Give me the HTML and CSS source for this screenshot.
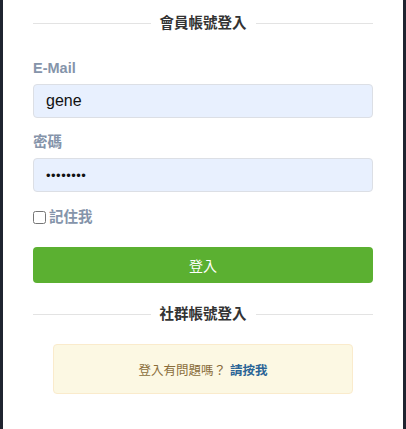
FILE: index.html
```html
<!DOCTYPE html>
<html lang="zh-Hant">
<head>
<meta charset="utf-8">
<title>會員登入</title>
<link rel="stylesheet" href="styles.css">
</head>
<body>
<div class="panel">
  <div class="divider"><span>會員帳號登入</span></div>
  <form class="form">
    <div class="field">
      <label class="label" for="email">E-Mail</label>
      <input class="input" id="email" type="text" value="gene">
    </div>
    <div class="field">
      <label class="label" for="pw">密碼</label>
      <input class="input input-pw" id="pw" type="password" value="12345678">
    </div>
    <div class="remember">
      <input type="checkbox" id="rm" class="check">
      <label for="rm" class="label">記住我</label>
    </div>
    <button type="button" class="btn">登入</button>
  </form>
  <div class="divider divider-social"><span>社群帳號登入</span></div>
  <div class="alert">登入有問題嗎？ <a href="#" class="alert-link">請按我</a></div>
</div>
</body>
</html>
```
FILE: styles.css
```css
html, body {
  margin: 0;
  padding: 0;
  height: 100%;
}
body {
  background: #1f2430;
  font-family: "Liberation Sans", "Noto Sans CJK TC", sans-serif;
  font-size: 14px;
  color: #333;
  padding: 0 3px;
  box-sizing: border-box;
}
.panel {
  background: #fff;
  min-height: 100%;
  padding: 13px 30px 20px;
  box-sizing: border-box;
}
.divider {
  display: flex;
  align-items: center;
  gap: 9px;
  font-weight: bold;
  font-size: 14.5px;
  line-height: 20px;
  color: #333;
}
.divider::before,
.divider::after {
  content: "";
  flex: 1;
  height: 1px;
  background: #e3e3e3;
}
.form {
  margin-top: 25px;
}
.field {
  display: flex;
  flex-direction: column;
  gap: 6px;
  margin-bottom: 14px;
}
.label {
  font-weight: bold;
  font-size: 14.5px;
  line-height: 20px;
  color: #8594aa;
}
.input {
  height: 34px;
  box-sizing: border-box;
  border: 1px solid #dcdfe5;
  border-radius: 4px;
  background: #e8f0fe;
  padding: 0 12px;
  font-family: "Liberation Sans", "Noto Sans CJK TC", sans-serif;
  font-size: 16px;
  color: #111;
  outline: none;
}
.input-pw {
  font-size: 13px;
  letter-spacing: 0.5px;
}
.remember {
  display: flex;
  align-items: center;
  gap: 3px;
  margin-top: 15px;
  height: 20px;
}
.check {
  margin: 0;
  width: 13px;
  height: 13px;
}
.btn {
  display: block;
  width: 100%;
  height: 36px;
  margin-top: 20px;
  border: none;
  border-radius: 4px;
  background: #5bb031;
  color: #fff;
  font-family: "Liberation Sans", "Noto Sans CJK TC", sans-serif;
  font-size: 14px;
}
.divider-social {
  margin-top: 21px;
}
.alert {
  width: 300px;
  height: 50px;
  box-sizing: border-box;
  margin: 20px auto 0;
  border: 1px solid #faebcc;
  border-radius: 4px;
  background: #fcf8e3;
  color: #8a6d3b;
  font-size: 12.5px;
  display: flex;
  align-items: center;
  justify-content: center;
}
.alert-link {
  color: #2a6496;
  font-weight: bold;
  text-decoration: none;
  margin-left: 4px;
}
```
